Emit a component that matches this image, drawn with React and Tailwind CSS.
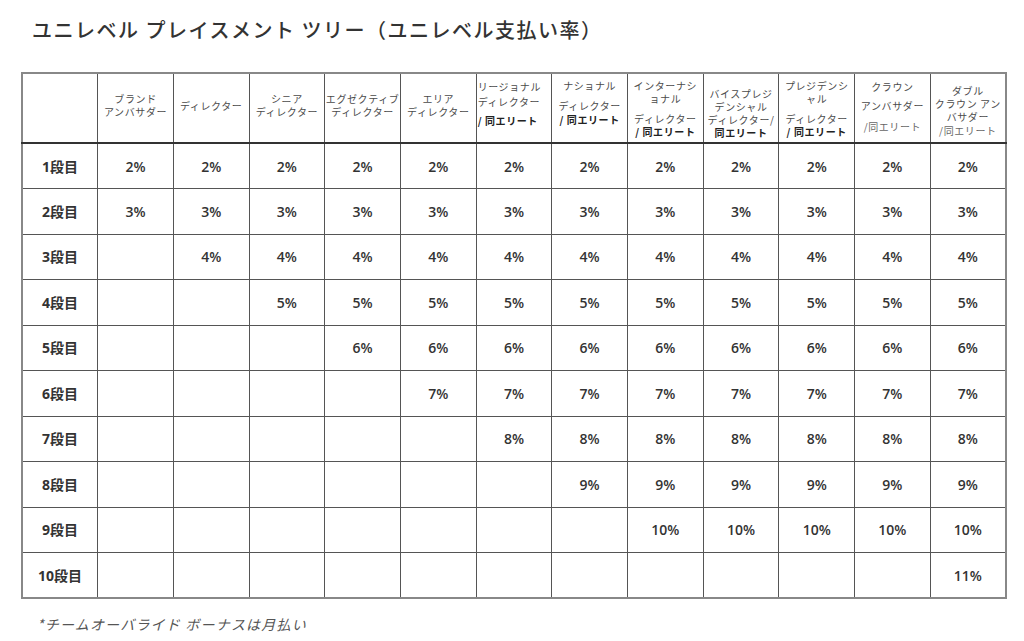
import React from 'react';

// header lines: [text, marginTop(px), style]  style: 'b' bold black, 'g' normal
const headers = [
  { lines: [] },
  { pad: 'pb-[6px]', lines: [['ブランド'], ['アンバサダー']] },
  { pad: 'pb-[6px]', lines: [['ディレクター']] },
  { pad: 'pb-[6px]', lines: [['シニア'], ['ディレクター']] },
  { pad: 'pb-[6px]', lines: [['エグゼクティブ'], ['ディレクター']] },
  { pad: 'pb-[6px]', lines: [['エリア'], ['ディレクター']] },
  { pad: 'pb-[10px]', left: true, lines: [['リージョナル'], ['ディレクター', 2], ['/ 同エリート', 6, 'b']] },
  { pad: 'pb-[12px]', lines: [['ナショナル'], ['ディレクター', 7], ['/ 同エリート', 1, 'b']] },
  { lines: [['インターナシ'], ['ョナル'], ['ディレクター', 7], ['/ 同エリート', 0, 'b']] },
  { pad: 'pt-[9px]', lines: [['バイスプレジ'], ['デンシャル'], ['ディレクター/'], ['同エリート', 0, 'b']] },
  { lines: [['プレジデンシ'], ['ャル'], ['ディレクター', 7], ['/ 同エリート', 0, 'b']] },
  { pad: 'pb-[4px]', lines: [['クラウン'], ['アンバサダー', 6], ['/同エリート', 8, 'g']] },
  { pad: 'pt-[5px]', lines: [['ダブル'], ['クラウン アン'], ['バサダー'], ['/同エリート', 1, 'g']] },
];

// first column (1-based) where each row starts having a value
const rowStart = [1, 1, 2, 3, 4, 5, 6, 7, 8, 12];

const HeaderCell = ({ h }) => (
  <th className="h-[70px] border border-[#555] p-0 align-middle font-normal">
    <div className={`flex flex-col ${h.left ? 'items-start pl-[1px]' : 'items-center'} ${h.pad || ''} text-[10px] leading-[13px] tracking-[0.6px] text-[#4a4a4a] whitespace-nowrap overflow-hidden`}>
      {h.lines.map(([text, mt = 0, kind], i) => (
        <div
          key={i}
          style={{ marginTop: mt }}
          className={kind === 'b' ? 'font-bold text-[#222]' : kind === 'g' ? 'text-[#666]' : ''}
        >
          {text}
        </div>
      ))}
    </div>
  </th>
);

export default function App() {
  return (
    <div className="min-h-[641px] bg-white font-[family-name:Noto_Sans_CJK_JP,sans-serif] text-[#333]">
      <h1 className="pl-[32px] pt-[16px] text-[20px] leading-[28px] font-medium tracking-[1.5px] text-[#333]">
        ユニレベル プレイスメント ツリー（ユニレベル支払い率）
      </h1>

      <table className="ml-[21px] mt-[28px] w-[986px] table-fixed border-collapse border-2 border-[#888]">
        <thead>
          <tr className="border-b-2 border-[#333]">
            {headers.map((h, i) => (
              <HeaderCell key={i} h={h} />
            ))}
          </tr>
        </thead>
        <tbody className="font-[family-name:Open_Sans,Noto_Sans_CJK_JP,sans-serif]">
          {rowStart.map((start, r) => (
            <tr key={r} className="h-[45.5px]">
              <td className="border border-[#555] text-center text-[14px] font-bold text-[#333]">
                {r + 1}段目
              </td>
              {Array.from({ length: 12 }).map((_, c) => (
                <td key={c} className="border border-[#555] text-center text-[14px] font-semibold text-[#333]">
                  {c + 1 >= start ? `${r + 2}%` : ''}
                </td>
              ))}
            </tr>
          ))}
        </tbody>
      </table>

      <p className="ml-[37px] mt-[15px] text-[14px] italic tracking-[1.2px] text-[#555]">
        *チームオーバライド ボーナスは月払い
      </p>
    </div>
  );
}
